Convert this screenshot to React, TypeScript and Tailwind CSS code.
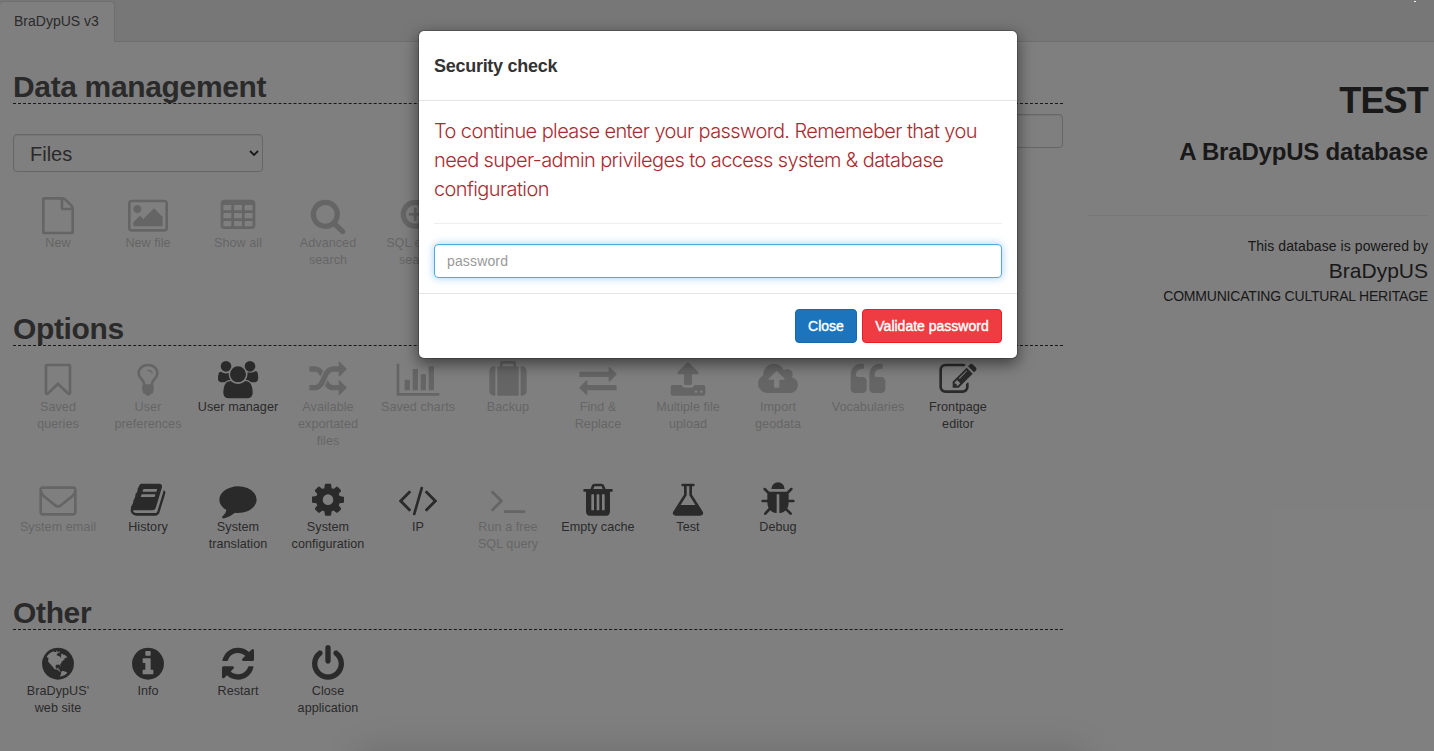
import React from "react";

type IconDef = { d: string; cx?: number };

const SEARCH =
  "M1216 832q0-185-131.5-316.5t-316.5-131.5-316.5 131.5-131.5 316.5 131.5 316.5 316.5 131.5 316.5-131.5 131.5-316.5zm512 832q0 52-38 90t-90 38q-54 0-90-38l-343-342q-179 124-399 124-143 0-273.5-55.5t-225-150-150-225-55.5-273.5 55.5-273.5 150-225 225-150 273.5-55.5 273.5 55.5 225 150 150 225 55.5 273.5q0 220-124 399l343 343q37 37 37 90z";
const CELL = "v-192q0-14-9-23t-23-9h-320q-14 0-23 9t-9 23v192q0 14 9 23t23 9h320q14 0 23-9t9-23z";
const QUOTE =
  "v384q0 80-56 136t-136 56h-384q-80 0-136-56t-56-136v-704q0-104 40.5-198.5t109.5-163.5 163.5-109.5 198.5-40.5h64q26 0 45 19t19 45v128q0 26-19 45t-45 19h-64q-106 0-181 75t-75 181v32q0 40 28 68t68 28h224q80 0 136 56t56 136z";
const SLOT = "v-704q0-14-9-23t-23-9h-64q-14 0-23 9t-9 23v704q0 14 9 23t23 9h64q14 0 23-9t9-23z";

const icons: Record<string, IconDef> = {
  file: {
    d: "M1596 380q28 28 48 76t20 88v1152q0 40-28 68t-68 28h-1344q-40 0-68-28t-28-68v-1600q0-40 28-68t68-28h896q40 0 88 20t76 48zm-444-244v376h376q-10-29-22-41l-313-313q-12-12-41-22zm384 1528v-1024h-416q-40 0-68-28t-28-68v-416h-768v1536h1280z",
  },
  image: {
    d: "M576 576q0 80-56 136t-136 56-136-56-56-136 56-136 136-56 136 56 56 136zm1024 384v448h-1408v-192l320-320 160 160 512-512zm96-704h-1600q-13 0-22.5 9.5t-9.5 22.5v1216q0 13 9.5 22.5t22.5 9.5h1600q13 0 22.5-9.5t9.5-22.5v-1216q0-13-9.5-22.5t-22.5-9.5zm160 32v1216q0 66-47 113t-113 47h-1600q-66 0-113-47t-47-113v-1216q0-66 47-113t113-47h1600q66 0 113 47t47 113z",
  },
  table: {
    d: `M576 1376${CELL}M576 992${CELL}M576 608${CELL}M1088 1376${CELL}M1088 992${CELL}M1088 608${CELL}M1600 1376${CELL}M1600 992${CELL}M1600 608${CELL}M1728 288v1088q0 66-47 113t-113 47h-1344q-66 0-113-47t-47-113v-1088q0-66 47-113t113-47h1344q66 0 113 47t47 113z`,
  },
  search: { d: SEARCH },
  zoomIn: {
    d:
      "M1088 800v64q0 13-9.5 22.5t-22.5 9.5h-224v224q0 13-9.5 22.5t-22.5 9.5h-64q-13 0-22.5-9.5t-9.5-22.5v-224h-224q-13 0-22.5-9.5t-9.5-22.5v-64q0-13 9.5-22.5t22.5-9.5h224v-224q0-13 9.5-22.5t22.5-9.5h64q13 0 22.5 9.5t9.5 22.5v224h224q13 0 22.5 9.5t9.5 22.5z" +
      SEARCH,
  },
  bookmark: {
    d: "M1408 256h-1024v1242l423-406 89-85 89 85 423 406v-1242zm12-128q23 0 44 9 33 13 52.5 41t19.5 62v1289q0 34-19.5 62t-52.5 41q-19 8-44 8-48 0-83-32l-441-424-441 424q-36 33-83 33-23 0-44-9-33-13-52.5-41t-19.5-62v-1289q0-34 19.5-62t52.5-41q21-9 44-9h1048z",
  },
  bulb: {
    d: "M1120 576q0 13-9.5 22.5t-22.5 9.5-22.5-9.5-9.5-22.5q0-46-54-71t-106-25q-13 0-22.5-9.5t-9.5-22.5 9.5-22.5 22.5-9.5q50 0 99.5 16t87 54 37.5 90zm160 0q0-72-34.5-134t-90-101.5-123-62-136.5-22.5-136.5 22.5-123 62-90 101.5-34.5 134q0 101 68 180 10 11 30.5 33t30.5 33q128 153 141 298h228q13-145 141-298 10-11 30.5-33t30.5-33q68-79 68-180zm128 0q0 155-103 268-45 49-74.5 87t-59.5 95.5-34 107.5q47 28 47 82 0 37-25 64 25 27 25 64 0 52-45 81 13 23 13 47 0 46-31.5 71t-77.5 25q-20 44-60 70t-87 26-87-26-60-70q-46 0-77.5-25t-31.5-71q0-24 13-47-45-29-45-81 0-37 25-64-25-27-25-64 0-54 47-82-4-50-34-107.5t-59.5-95.5-74.5-87q-103-113-103-268 0-99 44.5-184.5t117-142 164-89 186.5-32.5 186.5 32.5 164 89 117 142 44.5 184.5z",
  },
  users: {
    cx: 960,
    d: "M593 896q-162 5-265 128h-134q-82 0-138-40.5t-56-118.5q0-353 124-353 6 0 43.5 21t97.5 42.5 119 21.5q67 0 133-23-5 37-5 66 0 159 93 291zm1071 637q0 120-73 189.5t-194 69.5h-874q-121 0-194-69.5t-73-189.5q0-53 3.5-103.5t14-109 26.5-108.5 43-97.5 62-81 85.5-53.5 111.5-20q10 0 43 21.5t73 48 107 48 135 21.5 135-21.5 107-48 73-48 43-21.5q61 0 111.5 20t85.5 53.5 62 81 43 97.5 26.5 108.5 14 109 3.5 103.5zm-1024-1277q0 106-75 181t-181 75-181-75-75-181 75-181 181-75 181 75 75 181zm704 384q0 159-112.5 271.5t-271.5 112.5-271.5-112.5-112.5-271.5 112.5-271.5 271.5-112.5 271.5 112.5 112.5 271.5zm576 225q0 78-56 118.5t-138 40.5h-134q-103-123-265-128 93-132 93-291 0-29-5-66 66 23 133 23 59 0 119-21.5t97.5-42.5 43.5-21q124 0 124 353zm-128-609q0 106-75 181t-181 75-181-75-75-181 75-181 181-75 181 75 75 181z",
  },
  random: {
    d: "M666 481q-60 92-137 273-22-45-37-72.5t-40.5-63.5-51-56.5-63-35-81.5-14.5h-224q-14 0-23-9t-9-23v-192q0-14 9-23t23-9h224q250 0 410 225zm1126 799q0 14-9 23l-320 320q-9 9-23 9-13 0-22.5-9.5t-9.5-22.5v-192q-32 0-85 .5t-81 1-73-1-71-5-64-10.5-63-18.5-58-28.5-59-40-55-53.5-56-69.5q59-93 136-273 22 45 37 72.5t40.5 63.5 51 56.5 63 35 81.5 14.5h256v-192q0-14 9-23t23-9q12 0 24 10l319 319q9 9 9 23zm0-896q0 14-9 23l-320 320q-9 9-23 9-13 0-22.5-9.5t-9.5-22.5v-192h-256q-48 0-87 15t-69 45-51 61.5-45 77.5q-32 62-78 171-29 66-49.5 111t-54 105-64 100-74 83-90 68.5-106.5 42-128 16.5h-224q-14 0-23-9t-9-23v-192q0-14 9-23t23-9h224q48 0 87-15t69-45 51-61.5 45-77.5q32-62 78-171 29-66 49.5-111t54-105 64-100 74-83 90-68.5 106.5-42 128-16.5h256v-192q0-14 9-23t23-9q12 0 24 10l319 319q9 9 9 23z",
  },
  chart: {
    cx: 1024,
    d: "M640 896v512h-256v-512h256zm384-512v1024h-256v-1024h256zm1024 1152v128h-2048v-1536h128v1408h1920zm-640-896v768h-256v-768h256zm384-384v1152h-256v-1152h256z",
  },
  suitcase: {
    d: "M640 256h512v-128h-512v128zm-352 0v1408h-64q-92 0-158-66t-66-158v-960q0-92 66-158t158-66h64zm1120 0v1408h-1024v-1408h128v-160q0-40 28-68t68-28h576q40 0 68 28t28 68v160h128zm384 224v960q0 92-66 158t-158 66h-64v-1408h64q92 0 158 66t66 158z",
  },
  exchange: {
    d: "M1792 1184v192q0 13-9.5 22.5t-22.5 9.5h-1376v192q0 13-9.5 22.5t-22.5 9.5q-12 0-24-10l-319-320q-9-9-9-22 0-14 9-23l320-320q9-9 23-9 13 0 22.5 9.5t9.5 22.5v192h1376q13 0 22.5 9.5t9.5 22.5zm0-544q0 14-9 23l-320 320q-9 9-23 9-13 0-22.5-9.5t-9.5-22.5v-192h-1376q-13 0-22.5-9.5t-9.5-22.5v-192q0-13 9.5-22.5t22.5-9.5h1376v-192q0-14 9-23t23-9q12 0 24 10l319 319q9 9 9 23z",
  },
  upload: {
    d: "M1344 1472q0-26-19-45t-45-19-45 19-19 45 19 45 45 19 45-19 19-45zm256 0q0-26-19-45t-45-19-45 19-19 45 19 45 45 19 45-19 19-45zm128-224v320q0 40-28 68t-68 28h-1472q-40 0-68-28t-28-68v-320q0-40 28-68t68-28h427q21 56 70.5 92t110.5 36h256q61 0 110.5-36t70.5-92h427q40 0 68 28t28 68zm-325-648q-17 40-59 40h-256v448q0 26-19 45t-45 19h-256q-26 0-45-19t-19-45v-448h-256q-42 0-59-40-17-39 14-69l448-448q18-19 45-19t45 19l448 448q31 30 14 69z",
  },
  cloud: {
    cx: 960,
    d: "M1280 864q0-14-9-23l-352-352q-9-9-23-9t-23 9l-351 351q-10 12-10 24 0 14 9 23t23 9h224v352q0 13 9.5 22.5t22.5 9.5h192q13 0 22.5-9.5t9.5-22.5v-352h224q13 0 22.5-9.5t9.5-22.5zm640 288q0 159-112.5 271.5t-271.5 112.5h-1088q-185 0-316.5-131.5t-131.5-316.5q0-130 70-240t188-165q-2-30-2-43 0-212 150-362t362-150q156 0 285.5 87t188.5 231q71-62 166-62 106 0 181 75t75 181q0 76-41 138 130 31 213.5 135.5t83.5 238.5z",
  },
  quote: { d: `M832 960${QUOTE}M1728 960${QUOTE}` },
  edit: {
    d: "M888 1184l116-116-152-152-116 116v56h96v96h56zm440-720q-16-16-33 1l-350 350q-17 17-1 33t33-1l350-350q17-17 1-33zm80 594v190q0 119-84.5 203.5t-203.5 84.5h-832q-119 0-203.5-84.5t-84.5-203.5v-832q0-119 84.5-203.5t203.5-84.5h832q63 0 117 25 15 7 18 23 3 17-9 29l-49 49q-14 14-32 8-23-6-45-6h-832q-66 0-113 47t-47 113v832q0 66 47 113t113 47h832q66 0 113-47t47-113v-126q0-13 9-22l64-64q15-15 35-7t20 29zm-96-738l288 288-672 672h-288v-288zm444 132l-92 92-288-288 92-92q28-28 68-28t68 28l152 152q28 28 28 68t-28 68z",
  },
  envelope: {
    d: "M1664 1504v-768q-32 36-69 66-268 206-426 338-51 43-83 67t-86.5 48.5-102.5 24.5h-2q-48 0-102.5-24.5t-86.5-48.5-83-67q-158-132-426-338-37-30-69-66v768q0 13 9.5 22.5t22.5 9.5h1472q13 0 22.5-9.5t9.5-22.5zm0-1051v-24.5l-.5-13-3-12.5-5.5-9-9-7.5-14-2.5h-1472q-13 0-22.5 9.5t-9.5 22.5q0 168 147 284 193 152 401 317 6 5 35 29.5t46 37.5 44.5 31.5 50.5 27.5 43 9h2q20 0 43-9t50.5-27.5 44.5-31.5 46-37.5 35-29.5q208-165 401-317 54-43 100.5-115.5t46.5-131.5zm128-37v1088q0 66-47 113t-113 47h-1472q-66 0-113-47t-47-113v-1088q0-66 47-113t113-47h1472q66 0 113 47t47 113z",
  },
  book: {
    d: "M1703 478q40 57 18 129l-275 906q-19 64-76.5 107.5t-122.5 43.5h-923q-77 0-148.5-53.5t-99.5-131.5q-24-67-2-127 0-4 3-27t4-37q1-8-3-21.5t-3-19.5q2-11 8-21t16.5-23.5 16.5-23.5q23-38 45-91.5t30-91.5q3-10 .5-30t-.5-28q3-11 17-28t17-23q21-36 42-92t25-90q1-9-2.5-32t.5-28q4-13 22-30.5t22-22.5q19-26 42.5-84.5t27.5-96.5q1-8-3-25.5t-2-26.5q2-8 9-18t18-23 17-21q8-12 16.5-30.5t15-35 16-36 19.5-32 26.5-23.5 36-11.5 47.5 5.5l-1 3q38-9 51-9h761q74 0 114 56t18 130l-274 906q-36 119-71.5 153.5t-128.5 34.5h-869q-27 0-38 15-11 16-1 43 24 70 144 70h923q29 0 56-15.5t35-41.5l300-987q7-22 5-57 38 15 59 43zm-1064 2q-4 13 2 22.5t20 9.5h608q13 0 25.5-9.5t16.5-22.5l21-64q4-13-2-22.5t-20-9.5h-608q-13 0-25.5 9.5t-16.5 22.5zm-83 256q-4 13 2 22.5t20 9.5h608q13 0 25.5-9.5t16.5-22.5l21-64q4-13-2-22.5t-20-9.5h-608q-13 0-25.5 9.5t-16.5 22.5z",
  },
  comment: {
    d: "M1792 896q0 174-120 321.5t-326 233-450 85.5q-70 0-145-8-198 175-460 242-49 14-114 22-17 2-30.5-9t-17.5-29v-1q-3-4-.5-12t2-10 4.5-9.5l6-9 7-8.5 8-9q7-8 31-34.5t34.5-38 31-39.5 32.5-51 27-59 26-76q-157-89-247.5-220t-90.5-281q0-130 71-248.5t191-204.5 286-136.5 348-50.5q244 0 450 85.5t326 233 120 321.5z",
  },
  cog: {
    d: "M1152 896q0-106-75-181t-181-75-181 75-75 181 75 181 181 75 181-75 75-181zm512-109v222q0 12-8 23t-20 13l-185 28q-19 54-39 91 35 50 107 138 10 12 10 25t-9 23q-27 37-99 108t-94 71q-12 0-26-9l-138-108q-44 23-91 38-16 136-29 186-7 28-36 28h-222q-14 0-24.5-8.5t-11.5-21.5l-28-184q-49-16-90-37l-141 107q-10 9-25 9-14 0-25-11-126-114-165-168-7-10-7-23 0-12 8-23 15-21 51-66.5t54-70.5q-27-50-41-99l-183-27q-13-2-21-12.5t-8-23.5v-222q0-12 8-23t19-13l186-28q14-46 39-92-40-57-107-138-10-12-10-24 0-10 9-23 26-36 98.5-107.5t94.5-71.5q13 0 26 10l138 107q44-23 91-38 16-136 29-186 7-28 36-28h222q14 0 24.5 8.5t11.5 21.5l28 184q49 16 90 37l142-107q9-9 24-9 13 0 25 10 129 119 165 170 7 8 7 22 0 12-8 23-15 21-51 66.5t-54 70.5q26 50 41 98l183 28q13 2 21 12.5t8 23.5z",
  },
  code: {
    cx: 1024,
    d: "M681 1399l-50 50q-10 10-23 10t-23-10l-466-466q-10-10-10-23t10-23l466-466q10-10 23-10t23 10l50 50q10 10 10 23t-10 23l-393 393 393 393q10 10 10 23t-10 23zm591-1067l-373 1291q-4 13-15.5 19.5t-23.5 2.5l-62-17q-13-4-19.5-15.5t-2.5-24.5l373-1291q4-13 15.5-19.5t23.5-2.5l62 17q13 4 19.5 15.5t2.5 24.5zm657 651l-466 466q-10 10-23 10t-23-10l-50-50q-10-10-10-23t10-23l393-393-393-393q-10-10-10-23t10-23l50-50q10-10 23-10t23 10l466 466q10 10 10 23t-10 23z",
  },
  terminal: {
    d: "M649 983l-466 466q-10 10-23 10t-23-10l-50-50q-10-10-10-23t10-23l393-393-393-393q-10-10-10-23t10-23l50-50q10-10 23-10t23 10l466 466q10 10 10 23t-10 23zm1079 457v64q0 14-9 23t-23 9h-960q-14 0-23-9t-9-23v-64q0-14 9-23t23-9h960q14 0 23 9t9 23z",
  },
  trash: {
    d: `M704 1376${SLOT}M960 1376${SLOT}M1216 1376${SLOT}M672 384h448l-48-117q-7-9-17-11h-317q-10 2-17 11zM1600 416v64q0 14-9 23t-23 9h-96v948q0 83-47 143.5t-113 60.5h-832q-66 0-113-58.5t-47-141.5v-952h-96q-14 0-23-9t-9-23v-64q0-14 9-23t23-9h309l70-167q15-37 54-63t79-26h320q40 0 79 26t54 63l70 167h309q14 0 23 9t9 23z`,
  },
  flask: {
    d: "M1591 1448q56 89 21.5 152.5t-140.5 63.5h-1152q-106 0-140.5-63.5t21.5-152.5l503-793v-399h-64q-26 0-45-19t-19-45 19-45 45-19h512q26 0 45 19t19 45-19 45-45 19h-64v399zm-779-725l-272 429h712l-272-429-20-31v-436h-128v436z",
  },
  bug: {
    d: "M1696 960q0 26-19 45t-45 19h-224q0 171-67 290l208 209q19 19 19 45t-19 45q-18 19-45 19t-45-19l-198-197q-5 5-15 13t-42 28.5-65 36.5-82 29-97 13v-896h-128v896q-51 0-101.5-13.5t-87-33-66-39-43.5-32.5l-15-14-183 207q-20 21-48 21-24 0-43-16-19-18-20.5-44.5t15.5-46.5l202-227q-58-114-58-274h-224q-26 0-45-19t-19-45 19-45 45-19h224v-294l-173-173q-19-19-19-45t19-45 45-19 45 19l173 173h844l173-173q19-19 45-19t45 19 19 45-19 45l-173 173v294h224q26 0 45 19t19 45zm-480-576h-640q0-133 93.5-226.5t226.5-93.5 226.5 93.5 93.5 226.5z",
  },
  globe: {
    d: "M896 128q209 0 385.5 103t279.5 279.5 103 385.5-103 385.5-279.5 279.5-385.5 103-385.5-103-279.5-279.5-103-385.5 103-385.5 279.5-279.5 385.5-103zm274 521q-2 1-9.5 9.5t-13.5 9.5q2 0 4.5-5t5-11 3.5-7q6-7 22-15 14-6 52-12 34-8 51 11-2-2 9.5-13t14.5-12q3-2 15-4.5t15-7.5l2-22q-12 1-17.5-7t-6.5-21q0 2-6 8 0-7-4.5-8t-11.5 1-9 1q-10-3-15-7.5t-8-16.5-4-15q-2-5-9.5-11t-9.5-10q-1-2-2.5-5.5t-3-6.5-4-5.5-5.5-2.5-7 5-7.5 10-4.5 5q-3-2-6-1.5t-4.5 1-4.5 3-5 3.5q-3 2-8.5 3t-8.5 2q15-5-1-11-10-4-16-3 9-4 7.5-12t-8.5-14h5q-1-4-8.5-8.5t-17.5-8.5-13-6q-8-5-34-9.5t-33-.5q-5 6-4.5 10.5t4 14 3.5 12.5q1 6-5.5 13t-6.5 12q0 7 14 15.5t10 21.5q-3 8-16 16t-16 12q-5 8-1.5 18.5t10.5 16.5q2 2 1.5 4t-3.5 4.5-5.5 4-6.5 3.5l-3 2q-11 5-20.5-6t-13.5-26q-7-25-16-30-23-8-29 1-5-13-41-26-25-9-58-4 6-1 0-15-7-15-19-12 3-6 4-17.5t1-13.5q3-13 12-23 1-1 7-8.5t9.5-13.5.5-6q35 4 50-11 5-5 11.5-17t10.5-17q9-6 14-5.5t14.5 5.5 14.5 5q14 1 15.5-11t-7.5-20q12 1 3-17-4-7-8-9-12-4-27 5-8 4 2 8-1-1-9.5 10.5t-16.5 17.5-16-5q-1-1-5.5-13.5t-9.5-13.5q-8 0-16 15 3-8-11-15t-24-8q19-12-8-27-7-4-20.5-5t-19.5 4q-5 7-5.5 11.5t5 8 10.5 5.5 11.5 4 8.5 3q14 10 8 14-2 1-8.5 3.5t-11.5 4.5-6 4q-3 4 0 14t-2 14q-5-5-9-17.5t-7-16.5q7 9-25 6l-10-1q-4 0-16 2t-20.5 1-13.5-8q-4-8 0-20 1-4 4-2-4-3-11-9.5t-10-8.5q-46 15-94 41 6 1 12-1 5-2 13-6.5t10-5.5q34-14 42-7l5-5q14 16 20 25-7-4-30-1-20 6-22 12 7 12 5 18-4-3-11.5-10t-14.5-11-15-5q-16 0-22 1-146 80-235 222 7 7 12 8 4 1 5 9t2.5 11 11.5-3q9 8 3 19 1-1 44 27 19 17 21 21 3 11-10 18-1-2-9-9t-9-4q-3 5 .5 18.5t10.5 12.5q-7 0-9.5 16t-2.5 35.5-1 23.5l2 1q-3 12 5.5 34.5t21.5 19.5q-13 3 20 43 6 8 8 9 3 2 12 7.5t15 10 10 10.5q4 5 10 22.5t14 23.5q-2 6 9.5 20t10.5 23q-1 0-2.5 1t-2.5 1q3 7 15.5 14t15.5 13q1 3 2 10t3 11 8 2q2-20-24-62-15-25-17-29-3-5-5.5-15.5t-4.5-14.5q2 0 6 1.5t8.5 3.5 7.5 4 2 3q-3 7 2 17.5t12 18.5 17 19 12 13q6 6 14 19.5t0 13.5q9 0 20 10.5t17 19.5q5 8 8 26t5 24q2 7 8.5 13.5t12.5 9.5l16 8 13 7q5 2 18.5 10.5t21.5 11.5q10 4 16 4t14.5-2.5 13.5-3.5q15-2 29 15t21 21q36 19 55 11-2 1 .5 7.5t8 15.5 9 14.5 5.5 8.5q5 6 18 15t18 15q6-4 7-9-3 8 7 20t18 10q14-3 14-32-31 15-49-18 0-1-2.5-5.5t-4-8.5-2.5-8.5 0-7.5 5-3q9 0 10-3.5t-2-12.5-4-13q-1-8-11-20t-12-15q-5 9-16 8t-16-9q0 1-1.5 5.5t-1.5 6.5q-13 0-15-1 1-3 2.5-17.5t3.5-22.5q1-4 5.5-12t7.5-14.5 4-12.5-4.5-9.5-17.5-2.5q-19 1-26 20-1 3-3 10.5t-5 11.5-9 7q-7 3-24 2t-24-5q-13-8-22.5-29t-9.5-37q0-10 2.5-26.5t3-25-5.5-24.5q3-2 9-9.5t10-10.5q2-1 4.5-1.5t4.5 0 4-1.5 3-6q-1-1-4-3-3-3-4-3 7 3 28.5-1.5t27.5 1.5q15 11 22-2 0-1-2.5-9.5t-.5-13.5q5 27 29 9 3 3 15.5 5t17.5 5q3 2 7 5.5t5.5 4.5 5-.5 8.5-6.5q10 14 12 24 11 40 19 44 7 3 11 2t4.5-9.5 0-14-1.5-12.5l-1-8v-18l-1-8q-15-3-18.5-12t1.5-18.5 15-18.5q1-1 8-3.5t15.5-6.5 12.5-8q21-19 15-35 7 0 11-9-1 0-5-3t-7.5-5-4.5-2q9-5 2-16 5-3 7.5-11t7.5-10q9 12 21 2 7-8 1-16 5-7 20.5-10.5t18.5-9.5q7 2 8-2t1-12 3-12q4-5 15-9t13-5l17-11q3-4 0-4 18 2 31-11 10-11-6-20 3-6-3-9.5t-15-5.5q3-1 11.5-.5t10.5-1.5q15-10-7-16-17-5-43 12zm-163 877q206-36 351-189-3-3-12.5-4.5t-12.5-3.5q-18-7-24-8 1-7-2.5-13t-8-9-12.5-8-11-7q-2-2-7-6t-7-5.5-7.5-4.5-8.5-2-10 1l-3 1q-3 1-5.5 2.5t-5.5 3-4 3 0 2.5q-21-17-36-22-5-1-11-5.5t-10.5-7-10-1.5-11.5 7q-5 5-6 15t-2 13q-7-5 0-17.5t2-18.5q-3-6-10.5-4.5t-12 4.5-11.5 8.5-9 6.5-8.5 5.5-8.5 7.5q-3 4-6 12t-5 11q-2-4-11.5-6.5t-9.5-5.5q2 10 4 35t5 38q7 31-12 48-27 25-29 40-4 22 12 26 0 7-8 20.5t-7 21.5q0 6 2 16z",
  },
  info: {
    d: "M1152 1376v-160q0-14-9-23t-23-9h-96v-512q0-14-9-23t-23-9h-320q-14 0-23 9t-9 23v160q0 14 9 23t23 9h96v320h-96q-14 0-23 9t-9 23v160q0 14 9 23t23 9h448q14 0 23-9t9-23zm-128-896v-160q0-14-9-23t-23-9h-192q-14 0-23 9t-9 23v160q0 14 9 23t23 9h192q14 0 23-9t9-23zm640 416q0 209-103 385.5t-279.5 279.5-385.5 103-385.5-103-279.5-279.5-103-385.5 103-385.5 279.5-279.5 385.5-103 385.5 103 279.5 279.5 103 385.5z",
  },
  refresh: {
    d: "M1639 1056q0 5-1 7-64 268-268 434.5t-478 166.5q-146 0-282.5-55t-243.5-157l-129 129q-19 19-45 19t-45-19-19-45v-448q0-26 19-45t45-19h448q26 0 45 19t19 45-19 45l-137 137q71 66 161 102t187 36q134 0 250-65t186-179q11-17 53-117 8-23 30-23h192q13 0 22.5 9.5t9.5 22.5zm25-800v448q0 26-19 45t-45 19h-448q-26 0-45-19t-19-45 19-45l138-138q-148-137-349-137-134 0-250 65t-186 179q-11 17-53 117-8 23-30 23h-199q-13 0-22.5-9.5t-9.5-22.5v-7q65-268 270-434.5t480-166.5q146 0 284 55.5t245 156.5l130-129q19-19 45-19t45 19 19 45z",
  },
  power: {
    d: "M1664 896q0 156-61 298t-164 245-245 164-298 61-298-61-245-164-164-245-61-298q0-182 80.5-343t226.5-270q43-32 95.5-25t83.5 50q32 42 24.5 94.5t-49.5 84.5q-98 74-151.5 181t-53.5 228q0 104 40.5 198.5t109.5 163.5 163.5 109.5 198.5 40.5 198.5-40.5 163.5-109.5 109.5-163.5 40.5-198.5q0-121-53.5-228t-151.5-181q-42-32-49.5-84.5t24.5-94.5q31-43 84-50t95 25q146 109 226.5 270t80.5 343zm-640-768v640q0 52-38 90t-90 38-90-38-38-90v-640q0-52 38-90t90-38 90 38 38 90z",
  },
};

function Icon({ name }: { name: string }) {
  const { d, cx = 896 } = icons[name];
  return (
    <svg
      className="h-[38px] w-[44px] shrink-0 overflow-visible"
      viewBox={`${cx - 1056} 0 2112 1824`}
      fill="currentColor"
      aria-hidden="true"
    >
      <path d={d} />
    </svg>
  );
}

type Item = { icon: string; lines: string[]; on?: boolean };

function Tile({ icon, lines, on }: Item) {
  return (
    <div
      className={
        "flex h-[120px] w-[90px] flex-col items-center text-[12.6px] leading-[17px] tracking-[0.05px] whitespace-nowrap text-[#555] " +
        (on ? "" : "opacity-30")
      }
    >
      <Icon name={icon} />
      {lines.map((l) => (
        <span key={l}>{l}</span>
      ))}
    </div>
  );
}

function Heading({ children }: { children: React.ReactNode }) {
  return (
    <h2 className="h-[34px] border-b border-dashed border-[#333] text-[30px] leading-[33px] font-bold tracking-[-0.35px] text-[#555]">
      {children}
    </h2>
  );
}

const dataItems: Item[] = [
  { icon: "file", lines: ["New"] },
  { icon: "image", lines: ["New file"] },
  { icon: "table", lines: ["Show all"] },
  { icon: "search", lines: ["Advanced", "search"] },
  { icon: "zoomIn", lines: ["SQL expert", "search"] },
];
const options1: Item[] = [
  { icon: "bookmark", lines: ["Saved", "queries"] },
  { icon: "bulb", lines: ["User", "preferences"] },
  { icon: "users", lines: ["User manager"], on: true },
  { icon: "random", lines: ["Available", "exportated", "files"] },
  { icon: "chart", lines: ["Saved charts"] },
  { icon: "suitcase", lines: ["Backup"] },
  { icon: "exchange", lines: ["Find &", "Replace"] },
  { icon: "upload", lines: ["Multiple file", "upload"] },
  { icon: "cloud", lines: ["Import", "geodata"] },
  { icon: "quote", lines: ["Vocabularies"] },
  { icon: "edit", lines: ["Frontpage", "editor"], on: true },
];
const options2: Item[] = [
  { icon: "envelope", lines: ["System email"] },
  { icon: "book", lines: ["History"], on: true },
  { icon: "comment", lines: ["System", "translation"], on: true },
  { icon: "cog", lines: ["System", "configuration"], on: true },
  { icon: "code", lines: ["IP"], on: true },
  { icon: "terminal", lines: ["Run a free", "SQL query"] },
  { icon: "trash", lines: ["Empty cache"], on: true },
  { icon: "flask", lines: ["Test"], on: true },
  { icon: "bug", lines: ["Debug"], on: true },
];
const otherItems: Item[] = [
  { icon: "globe", lines: ["BraDypUS'", "web site"], on: true },
  { icon: "info", lines: ["Info"], on: true },
  { icon: "refresh", lines: ["Restart"], on: true },
  { icon: "power", lines: ["Close", "application"], on: true },
];

function Row({ items }: { items: Item[] }) {
  return (
    <div className="flex">
      {items.map((it) => (
        <Tile key={it.icon} {...it} />
      ))}
    </div>
  );
}

function SecurityDialog() {
  return (
    <div
      role="dialog"
      className="mt-[30px] h-[329px] w-[600px] rounded-md border border-black/20 bg-white bg-clip-padding text-[#333] shadow-[0_5px_15px_rgba(0,0,0,0.5)]"
    >
      <div className="flex h-[70px] items-center border-b border-[#e5e5e5] px-[15px]">
        <h4 className="text-[18px] leading-5 font-bold tracking-[-0.28px]">Security check</h4>
      </div>
      <div className="h-[192px] px-[15px] pt-[16px]">
        <div className="border-b border-[#eee] pb-[19px] font-['Inter'] text-[20px] leading-[29px] font-light tracking-[-0.6px] whitespace-nowrap text-[#a92b32]">
          <p>To continue please enter your password. Rememeber that you</p>
          <p>need super-admin privileges to access system &amp; database</p>
          <p>configuration</p>
        </div>
        <input
          type="password"
          placeholder="password"
          className="mt-[20px] block h-[34px] w-full rounded border border-[#4fa9e3] px-3 text-[14px] tracking-[0.15px] outline-none placeholder:text-[#999] shadow-[inset_0_1px_1px_rgba(0,0,0,0.075),0_0_8px_rgba(102,175,233,0.6)]"
        />
      </div>
      <div className="flex justify-end gap-[5px] border-t border-[#e5e5e5] p-[15px]">
        <button className="h-[34px] w-[62px] rounded border border-[#1a68a8] bg-[#1c75bc] text-[14px] text-white [-webkit-text-stroke:0.4px_#fff]">
          Close
        </button>
        <button className="h-[34px] w-[140px] rounded border border-[#ec1c24] bg-[#ee3c42] text-[14px] text-white [-webkit-text-stroke:0.4px_#fff]">
          Validate password
        </button>
      </div>
    </div>
  );
}

export default function App() {
  return (
    <div className="relative h-[751px] w-[1434px] overflow-hidden bg-white font-['Liberation_Sans',Arial,sans-serif] text-[14px] text-[#333]">
      <div className="flex h-[42px] items-end border-b border-[#ddd] bg-[#eee]">
        <div className="-mb-px flex h-[41px] w-[115px] items-center rounded-t border border-b-white border-l-0 border-[#ddd] bg-white pl-[14px] text-[#555]">
          BraDypUS v3
        </div>
      </div>

      <div className="flex">
        <main className="ml-[13px] w-[1050px] pt-[28px]">
          <Heading>Data management</Heading>
          <div className="flex h-[93px] items-start justify-between">
            <div className="mt-[30px] flex h-[38px] w-[250px] items-center justify-between rounded border border-[#ccc] pr-[3px] pl-[16px] text-[20px] text-[#555] shadow-[inset_0_1px_1px_rgba(0,0,0,0.075)]">
              <span className="pt-[2px]">Files</span>
              <svg className="h-[6px] w-[10px]" viewBox="0 0 10 6" fill="none" stroke="#333" strokeWidth="1.8" aria-hidden="true">
                <path d="M1 1l4 4 4-4" />
              </svg>
            </div>
            <div className="mt-[10px] h-[34px] w-[250px] rounded border border-[#ccc] shadow-[inset_0_1px_1px_rgba(0,0,0,0.075)]" />
          </div>
          <Row items={dataItems} />
          <div className="-mt-[5px]">
            <Heading>Options</Heading>
          </div>
          <div className="mt-[15px]">
            <Row items={options1} />
            <Row items={options2} />
          </div>
          <div className="-mt-[5px]">
            <Heading>Other</Heading>
          </div>
          <div className="mt-[15px]">
            <Row items={otherItems} />
          </div>
        </main>

        <aside className="ml-[25px] w-[340px] pt-[39px] text-right whitespace-nowrap">
          <h1 className="text-[36px] leading-10 font-bold tracking-[-0.8px]">TEST</h1>
          <h3 className="mt-[18px] text-[24px] leading-[26px] font-bold tracking-[-0.2px]">A BraDypUS database</h3>
          <div className="mt-[50px] border-t border-[#eee]" />
          <p className="mt-[20px] leading-5 tracking-[0.08px]">This database is powered by</p>
          <p className="mt-[3px] text-[21px] leading-[24px]">BraDypUS</p>
          <p className="mt-[3px] leading-5 tracking-[-0.2px]">COMMUNICATING CULTURAL HERITAGE</p>
        </aside>
      </div>

      <div className="absolute inset-0 flex items-start justify-center bg-black/50 pl-[2px]">
        <SecurityDialog />
      </div>
      <div className="absolute top-px left-[1414px] h-px w-[2px] bg-white" />
      <div className="absolute top-[751px] left-[358px] h-[60px] w-[728px] shadow-[0_0_36px_rgba(0,0,0,0.15)]" />
    </div>
  );
}
